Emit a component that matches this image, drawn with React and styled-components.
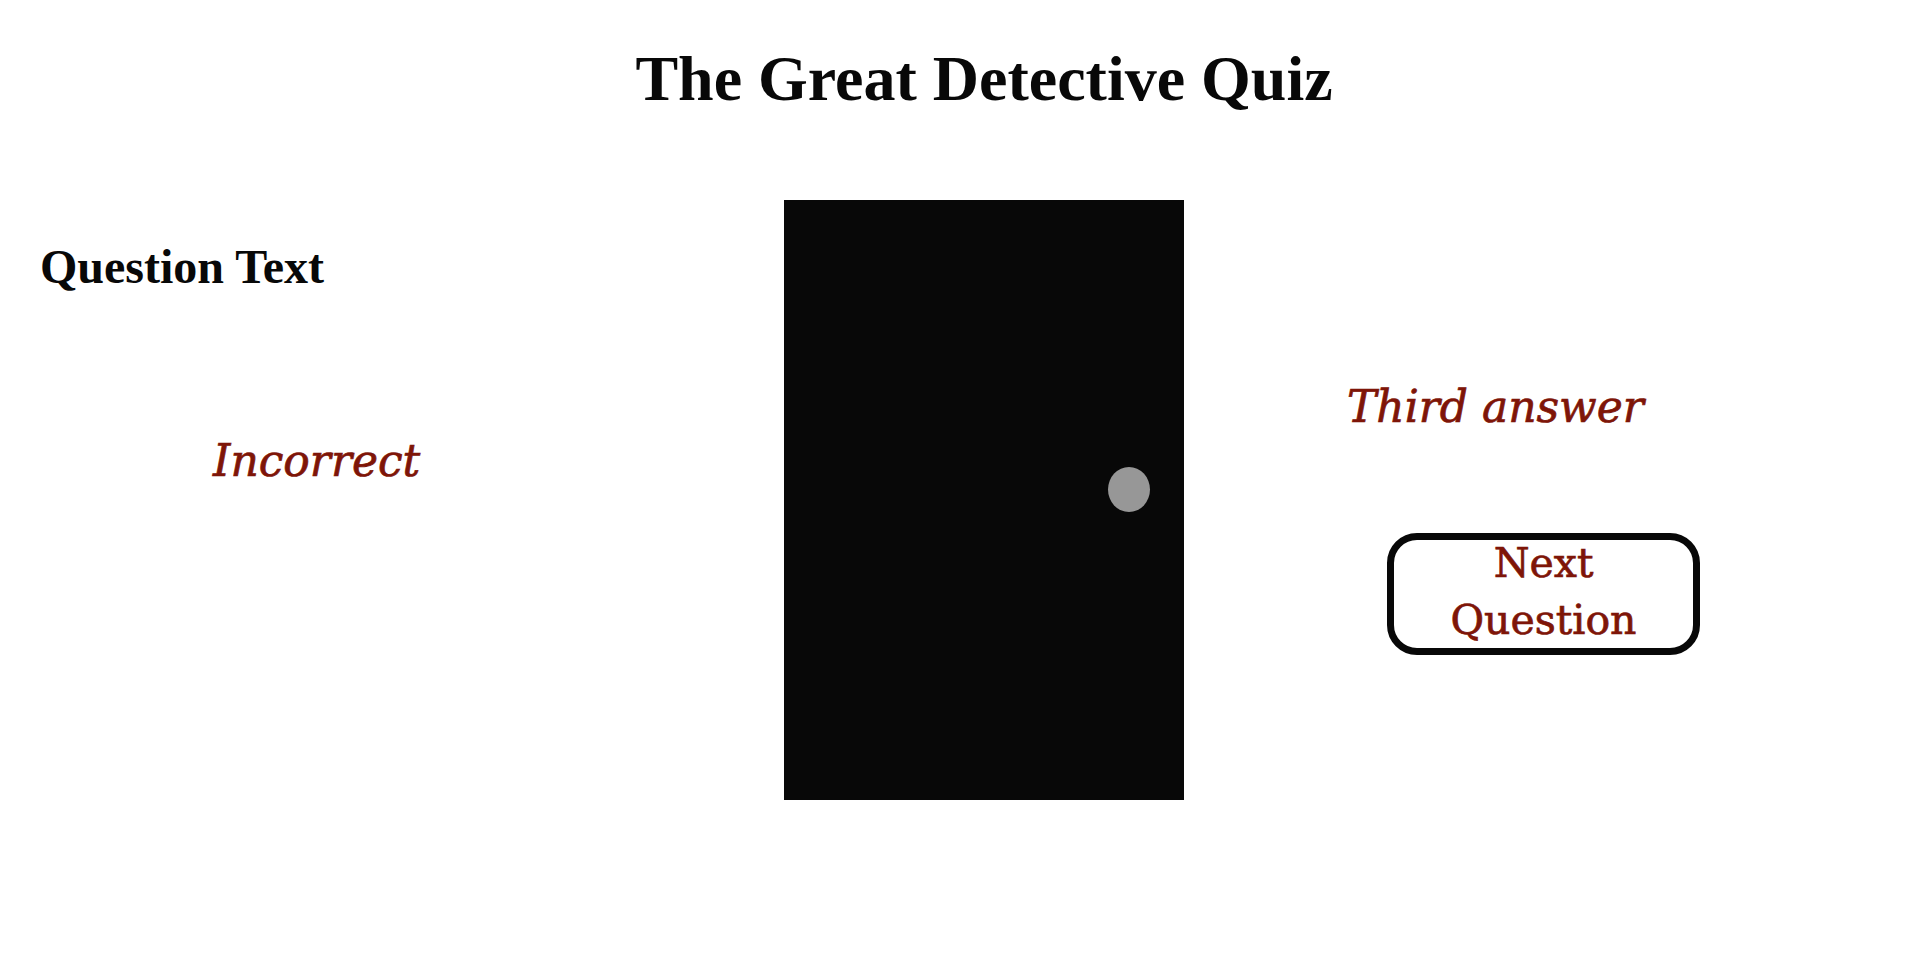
import React from 'react';
import styled, { createGlobalStyle } from 'styled-components';

const GlobalStyle = createGlobalStyle`
  html, body {
    margin: 0;
    padding: 0;
    background: #ffffff;
  }
  body {
    font-family: 'Liberation Serif', 'Times New Roman', serif;
    color: #080808;
  }
`;

const Page = styled.div`
  width: 1932px;
  height: 960px;
  box-sizing: border-box;
  padding: 42px 0 0 36px;
  display: flex;
  flex-direction: column;
`;

const Title = styled.h1`
  margin: 0;
  font-family: 'Liberation Serif', 'Times New Roman', serif;
  font-size: 64px;
  font-weight: bold;
  text-align: center;
  line-height: normal;
`;

const Stage = styled.div`
  margin-top: 84px;
  display: grid;
  grid-template-columns: 1fr 400px 1fr;
`;

const Side = styled.div`
  display: flex;
  flex-direction: column;
  align-items: flex-start;
`;

const QuestionText = styled.h2`
  margin: 39px 0 0 4px;
  font-family: 'Liberation Serif', 'Times New Roman', serif;
  font-size: 48px;
  font-weight: bold;
  line-height: normal;
`;

const Answer = styled.p`
  margin: ${({ $top }) => $top}px 0 0 ${({ $left }) => $left}px;
  font-family: 'DejaVu Serif', serif;
  font-style: italic;
  font-size: 44px;
  line-height: normal;
  color: #7e1508;
  -webkit-text-stroke: 0.7px #7e1508;
`;

const Door = styled.div`
  height: 600px;
  background: #080808;
  display: flex;
  align-items: center;
  justify-content: flex-end;
  padding: 0 34px 21px 0;
  box-sizing: border-box;
`;

const Knob = styled.div`
  width: 42px;
  height: 45px;
  border-radius: 50%;
  background: #979797;
`;

const NextButton = styled.button`
  margin: 101px 0 0 203px;
  width: 313px;
  height: 122px;
  box-sizing: border-box;
  border: 7px solid #080808;
  border-radius: 30px;
  background: #ffffff;
  padding: 0;
  font-family: 'DejaVu Serif', serif;
  font-size: 41px;
  line-height: 57px;
  color: #7e1508;
  -webkit-text-stroke: 0.7px #7e1508;
  cursor: pointer;
`;

const ButtonLabel = styled.span`
  display: block;
  margin-top: -5px;
`;

export default function App() {
  return (
    <>
      <GlobalStyle />
      <Page>
        <Title>The Great Detective Quiz</Title>
        <Stage>
          <Side>
            <QuestionText>Question Text</QuestionText>
            <Answer $top={141} $left={177}>Incorrect</Answer>
          </Side>
          <Door>
            <Knob />
          </Door>
          <Side>
            <Answer $top={181} $left={163}>Third answer</Answer>
            <NextButton>
              <ButtonLabel>Next<br />Question</ButtonLabel>
            </NextButton>
          </Side>
        </Stage>
      </Page>
    </>
  );
}
